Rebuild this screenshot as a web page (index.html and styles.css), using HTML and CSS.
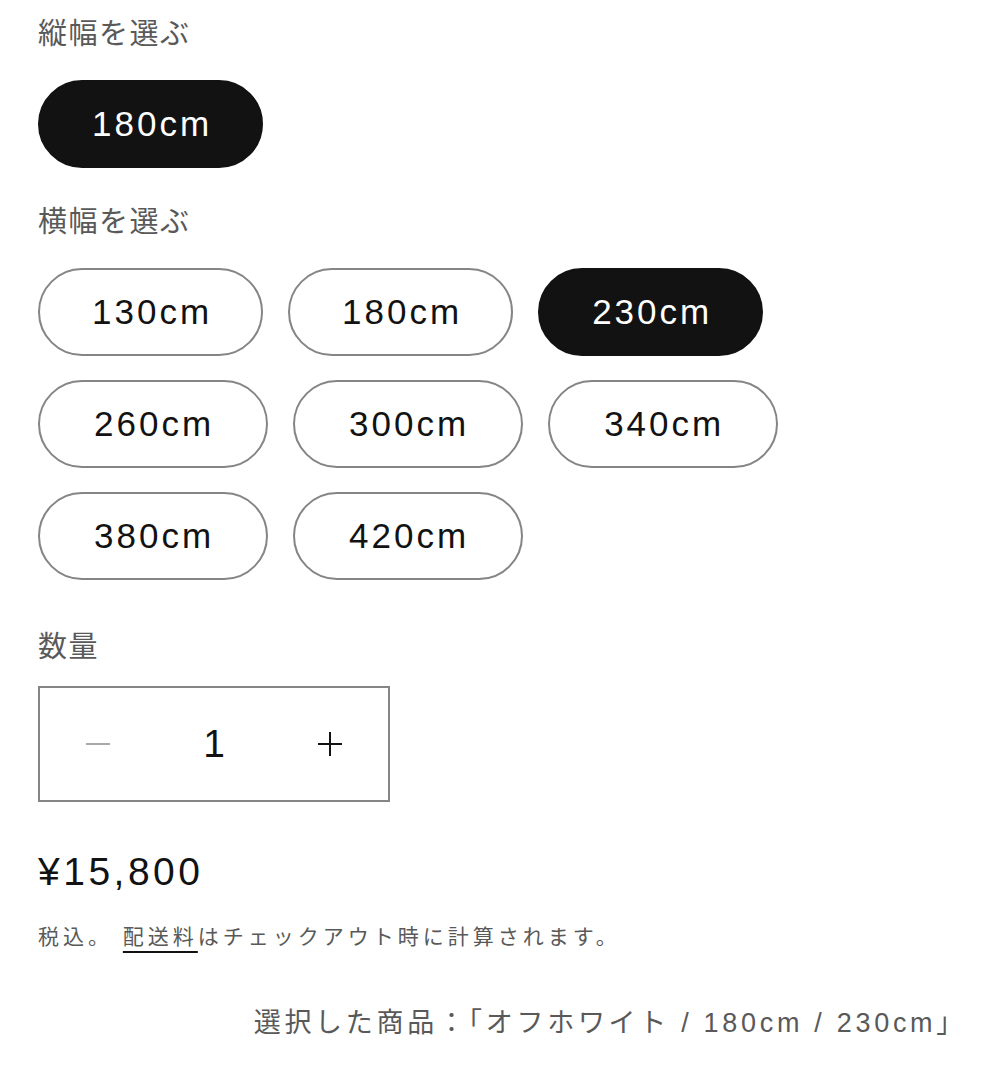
FILE: index.html
```html
<!DOCTYPE html>
<html lang="ja">
<head>
    <meta charset="UTF-8">
    <meta name="viewport" content="width=device-width, initial-scale=1.0">
    <title>商品オプション</title>
    <link rel="stylesheet" href="styles.css">
</head>
<body>
<div class="product-form">
    <!-- 縦幅 -->
    <fieldset class="variant-group">
        <legend class="form-label">縦幅を選ぶ</legend>
        <div class="pill-list">
            <span class="pill is-active">180cm</span>
        </div>
    </fieldset>

    <!-- 横幅 -->
    <fieldset class="variant-group variant-group-second">
        <legend class="form-label">横幅を選ぶ</legend>
        <div class="pill-list">
            <span class="pill">130cm</span>
            <span class="pill">180cm</span>
            <span class="pill is-active">230cm</span>
            <span class="pill wide">260cm</span>
            <span class="pill wide">300cm</span>
            <span class="pill wide">340cm</span>
            <span class="pill wide">380cm</span>
            <span class="pill wide">420cm</span>
        </div>
    </fieldset>

    <!-- 数量 -->
    <div class="quantity-group">
        <p class="form-label">数量</p>
        <div class="quantity">
            <button class="qty-btn is-disabled" type="button" aria-label="減らす">
                <svg width="26" height="26" viewBox="0 0 26 26"><line x1="1" y1="13" x2="25" y2="13" stroke="currentColor" stroke-width="2"/></svg>
            </button>
            <span class="qty-value">1</span>
            <button class="qty-btn" type="button" aria-label="増やす">
                <svg width="26" height="26" viewBox="0 0 26 26"><line x1="1" y1="13" x2="25" y2="13" stroke="currentColor" stroke-width="2"/><line x1="13" y1="1" x2="13" y2="25" stroke="currentColor" stroke-width="2"/></svg>
            </button>
        </div>
    </div>

    <p class="price">¥15,800</p>
    <p class="tax-note">税込。 <a href="#">配送料</a>はチェックアウト時に計算されます。</p>

    <p class="selected">選択した商品：「オフホワイト / 180cm / 230cm」</p>
</div>
</body>
</html>
```

FILE: styles.css
```css
* {
    box-sizing: border-box;
    margin: 0;
    padding: 0;
}

body {
    background-color: #ffffff;
    color: #121212;
    font-family: "Liberation Sans", "Noto Sans CJK JP", sans-serif;
}

.product-form {
    padding: 17px 34px 0 38px;
}

.variant-group {
    border: none;
}

.variant-group-second {
    margin-top: 37px;
}

.form-label {
    display: block;
    font-size: 29px;
    line-height: 35px;
    letter-spacing: 1.5px;
    color: #595959;
}

.pill-list {
    display: flex;
    flex-wrap: wrap;
    gap: 24px 25px;
    margin-top: 28px;
}

.pill {
    display: inline-flex;
    align-items: center;
    justify-content: center;
    height: 88px;
    padding: 0 49px 0 52px;
    border: 2px solid #858585;
    border-radius: 44px;
    font-size: 35px;
    letter-spacing: 3px;
    color: #121212;
}

.pill.wide {
    padding: 0 52px 0 54px;
}

.pill.is-active {
    background-color: #121212;
    border-color: #121212;
    color: #ffffff;
}

.quantity-group {
    margin-top: 50px;
}

.quantity {
    display: grid;
    grid-template-columns: repeat(3, 1fr);
    width: 352px;
    height: 116px;
    margin-top: 21px;
    border: 2px solid #858585;
}

.qty-btn {
    display: flex;
    align-items: center;
    justify-content: center;
    background: none;
    border: none;
    color: #121212;
}

.qty-btn.is-disabled {
    color: #a8a8a8;
}

.qty-value {
    display: flex;
    align-items: center;
    justify-content: center;
    font-size: 39px;
}

.price {
    margin-top: 46px;
    font-size: 39px;
    line-height: 47px;
    letter-spacing: 3.5px;
}

.tax-note {
    margin-top: 27px;
    font-size: 21px;
    line-height: 30px;
    letter-spacing: 4px;
    color: #595959;
}

.tax-note a {
    color: #595959;
    text-decoration: underline;
    text-decoration-thickness: 2px;
    text-underline-offset: 7px;
    text-decoration-color: #121212;
}

.selected {
    margin-top: 53px;
    text-align: right;
    font-size: 27px;
    line-height: 36px;
    letter-spacing: 3.7px;
    color: #595959;
}
```
